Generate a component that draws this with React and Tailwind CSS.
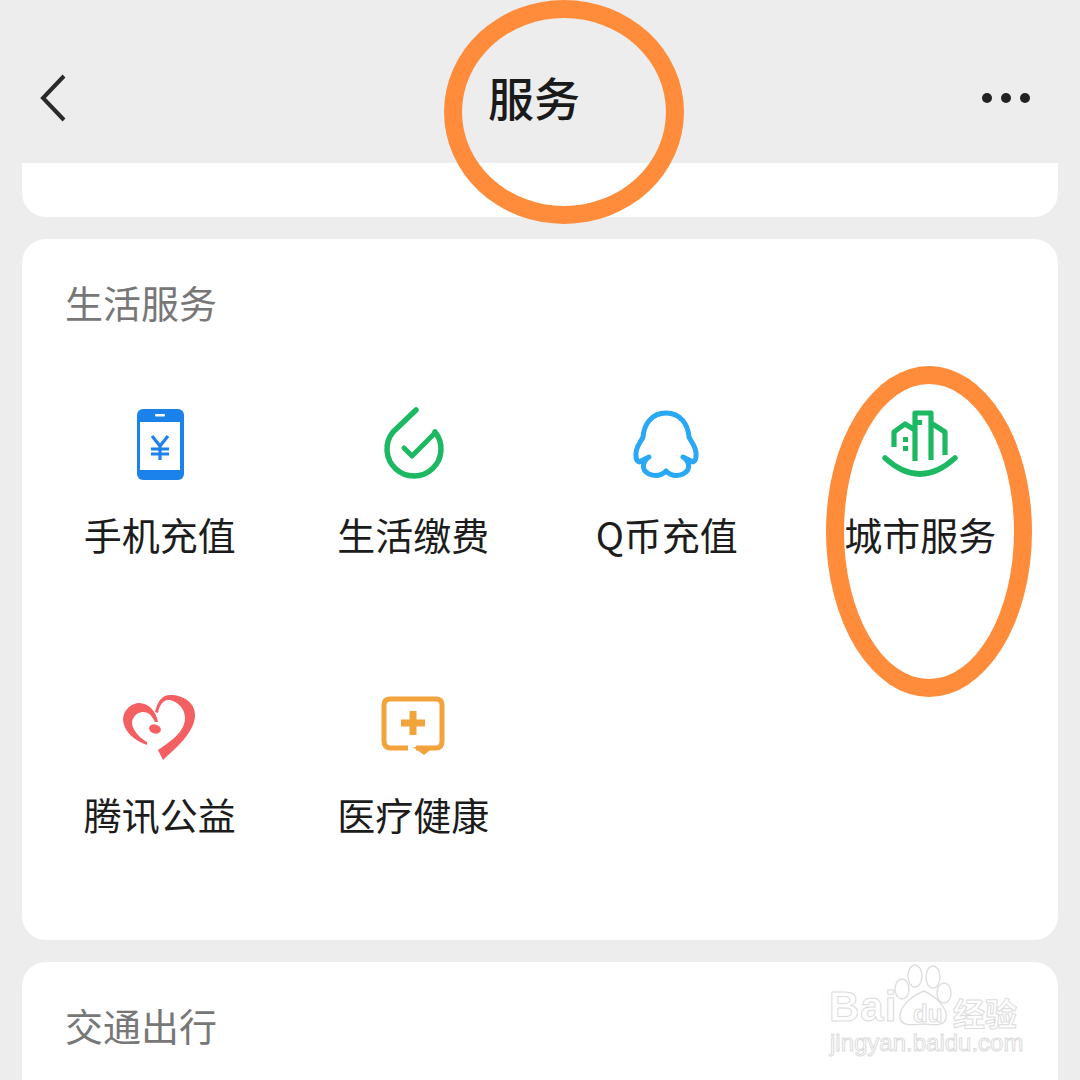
import React from 'react'

const font = { fontFamily: '"Noto Sans CJK SC", "Noto Sans", sans-serif' }

const PhoneIcon = () => (
  <svg width="70" height="80" viewBox="125 402 70 80">
    <rect x="137" y="409" width="47" height="71" rx="6" fill="#1b82eb" />
    <rect x="140" y="422" width="40" height="48" fill="#fff" />
    <rect x="155" y="414" width="10" height="2.5" rx="1" fill="#fff" />
    <path d="M152 436 L160 446 L168 436 M151 449 H169 M151 454 H169 M160 446 V460" fill="none" stroke="#1b82eb" strokeWidth="3.2" />
  </svg>
)

const PayIcon = () => (
  <svg width="70" height="80" viewBox="379 402 70 80">
    <path d="M417 410 L394 432 A27 27 0 1 0 436 432" fill="none" stroke="#1db862" strokeWidth="5.5" strokeLinecap="round" strokeLinejoin="round" />
    <path d="M405 448 L413 456 L436 433" fill="none" stroke="#1db862" strokeWidth="5" strokeLinecap="round" strokeLinejoin="round" />
  </svg>
)

const QqIcon = () => (
  <svg width="70" height="80" viewBox="633 402 70 80">
    <path d="M667 413 C652 413 645 425 644 437 C642 442 636 447 637 456 C637 461 640 463 642 461 L650 457 C643 462 642 470 650 474 C657 477 663 475 667 471 C671 475 677 477 684 474 C692 470 691 462 684 457 L692 461 C694 463 697 461 697 456 C698 447 692 442 690 437 C689 425 682 413 667 413 Z" fill="none" stroke="#29a9f5" strokeWidth="5" strokeLinejoin="round" />
  </svg>
)

const CityIcon = () => (
  <svg width="80" height="80" viewBox="880 402 80 80">
    <path d="M885 458 Q920 490 955 458" fill="none" stroke="#1db862" strokeWidth="5.5" strokeLinecap="round" />
    <path d="M915 461 V413 H931 V460 M931 423 L945 432 V455 M915 430 L905 424 L894 432 V447" fill="none" stroke="#1db862" strokeWidth="5.2" strokeLinejoin="round" />
    <rect x="917" y="420" width="5" height="5" fill="#1db862" />
    <rect x="903" y="437" width="5" height="5" fill="#1db862" />
    <rect x="903" y="446" width="5" height="5" fill="#1db862" />
  </svg>
)

const HeartIcon = () => (
  <svg width="80" height="80" viewBox="120 682 80 80">
    <path d="M155 712 C157 702 162 695 170 695 C184 695 195 703 195 715 C195 732 176 748 163 760 L158 750 C170 742 185 732 185 718 C185 707 175 700 168 700 C163 700 159 706 158 713 Z" fill="#f45f62" />
    <path d="M158 722 C156 711 149 704 140 703 C130 703 123 711 123 720 C124 732 135 741 147 745 L147 742 C138 737 132 729 132 722 C133 716 138 712 143 712 C149 712 152 716 155 722 Z" fill="#f45f62" />
    <ellipse cx="155" cy="729" rx="6" ry="4.5" transform="rotate(15 155 729)" fill="#f45f62" />
  </svg>
)

const HealthIcon = () => (
  <svg width="70" height="80" viewBox="379 682 70 80">
    <path d="M409 748 H392 Q385 748 385 741 V705 Q385 699 391 699 H437 Q443 699 443 705 V741 Q443 748 437 748 H417" fill="none" stroke="#f2a33c" strokeWidth="5" />
    <path d="M414 747 H435 L425 755 Z" fill="#f2a33c" />
    <path d="M402 723 H426 M414 711 V735" fill="none" stroke="#f2a33c" strokeWidth="7" />
  </svg>
)

const services = [
  { label: '手机充值', icon: <PhoneIcon /> },
  { label: '生活缴费', icon: <PayIcon /> },
  { label: 'Q币充值', icon: <QqIcon /> },
  { label: '城市服务', icon: <CityIcon /> },
  { label: '腾讯公益', icon: <HeartIcon /> },
  { label: '医疗健康', icon: <HealthIcon /> },
]

const Watermark = () => (
  <div className="absolute left-[826px] top-[962px] w-[200px] h-[100px] text-white [-webkit-text-stroke:1px_#dcdcdc]">
    <svg className="absolute left-0 top-0" width="200" height="70" viewBox="826 962 200 70">
      <g fill="#fff" stroke="#dedede" strokeWidth="1.4">
        <ellipse cx="915" cy="976" rx="7" ry="11" />
        <ellipse cx="933" cy="977" rx="7" ry="11" />
        <ellipse cx="902" cy="989" rx="7" ry="10" />
        <ellipse cx="944" cy="993" rx="7" ry="10" />
        <path d="M924 991 C935 996 948 1008 946 1018 C944 1028 930 1024 924 1024 C916 1024 902 1028 900 1018 C899 1006 912 996 924 991 Z" />
      </g>
    </svg>
    <span className="absolute left-[3px] top-[20px] text-[42px] leading-[50px] font-bold tracking-[1px]" style={{ fontFamily: '"Liberation Sans", sans-serif' }}>Bai</span>
    <span className="absolute left-[87px] top-[38px] text-[24px] leading-[28px] font-bold" style={{ fontFamily: '"Liberation Sans", sans-serif' }}>du</span>
    <span className="absolute left-[127px] top-[35px] text-[32px] leading-[30px] font-bold whitespace-nowrap">经验</span>
    <span className="absolute left-[4px] top-[67px] text-[24px] leading-[28px] whitespace-nowrap" style={{ fontFamily: '"Liberation Sans", sans-serif' }}>jingyan.baidu.com</span>
  </div>
)

export default function App() {
  return (
    <div className="relative w-[1080px] h-[1080px] overflow-hidden bg-[#ededed]" style={font}>
      <header className="h-[163px] flex items-center justify-between pl-[38px] pr-[50px] pt-[33px]">
        <svg width="30" height="48" viewBox="38 74 30 48">
          <path d="M64 76 L43 98 L64 120" fill="none" stroke="#2a2a2a" strokeWidth="4" />
        </svg>
        <h1 className="text-[46px] leading-[60px] font-medium text-[#1a1a1a] pl-[18px] mb-[5px]">服务</h1>
        <div className="flex gap-[9px]">
          <span className="w-[10px] h-[10px] rounded-full bg-[#222]" />
          <span className="w-[10px] h-[10px] rounded-full bg-[#222]" />
          <span className="w-[10px] h-[10px] rounded-full bg-[#222]" />
        </div>
      </header>

      <div className="flex flex-col gap-[22px] mx-[22px]">
        <div className="h-[54px] bg-white rounded-b-[24px]" />

        <section className="h-[701px] bg-white rounded-[24px] px-[11px] pt-[37px]">
          <h2 className="pl-[32px] text-[38px] leading-[52px] text-[#777]">生活服务</h2>
          <div className="grid grid-cols-4 mt-[74px]">
            {services.map((s) => (
              <div key={s.label} className="h-[280px] flex flex-col items-center">
                <div className="h-[80px] flex items-center justify-center">{s.icon}</div>
                <span className="mt-[24px] text-[38px] leading-[56px] text-[#1c1c1c] whitespace-nowrap">{s.label}</span>
              </div>
            ))}
          </div>
        </section>

        <section className="h-[200px] bg-white rounded-[24px] pl-[43px] pt-[37px]">
          <h2 className="text-[38px] leading-[52px] text-[#777]">交通出行</h2>
        </section>
      </div>

      {/* hand-drawn annotation rings on top of the screenshot */}
      <div className="absolute left-[444px] top-0 w-[240px] h-[224px] rounded-[50%] border-[18px] border-[#ff8c3a]" />
      <div className="absolute left-[826px] top-[366px] w-[206px] h-[331px] rounded-[50%] border-[18px] border-[#ff8c3a]" />

      <Watermark />
    </div>
  )
}
